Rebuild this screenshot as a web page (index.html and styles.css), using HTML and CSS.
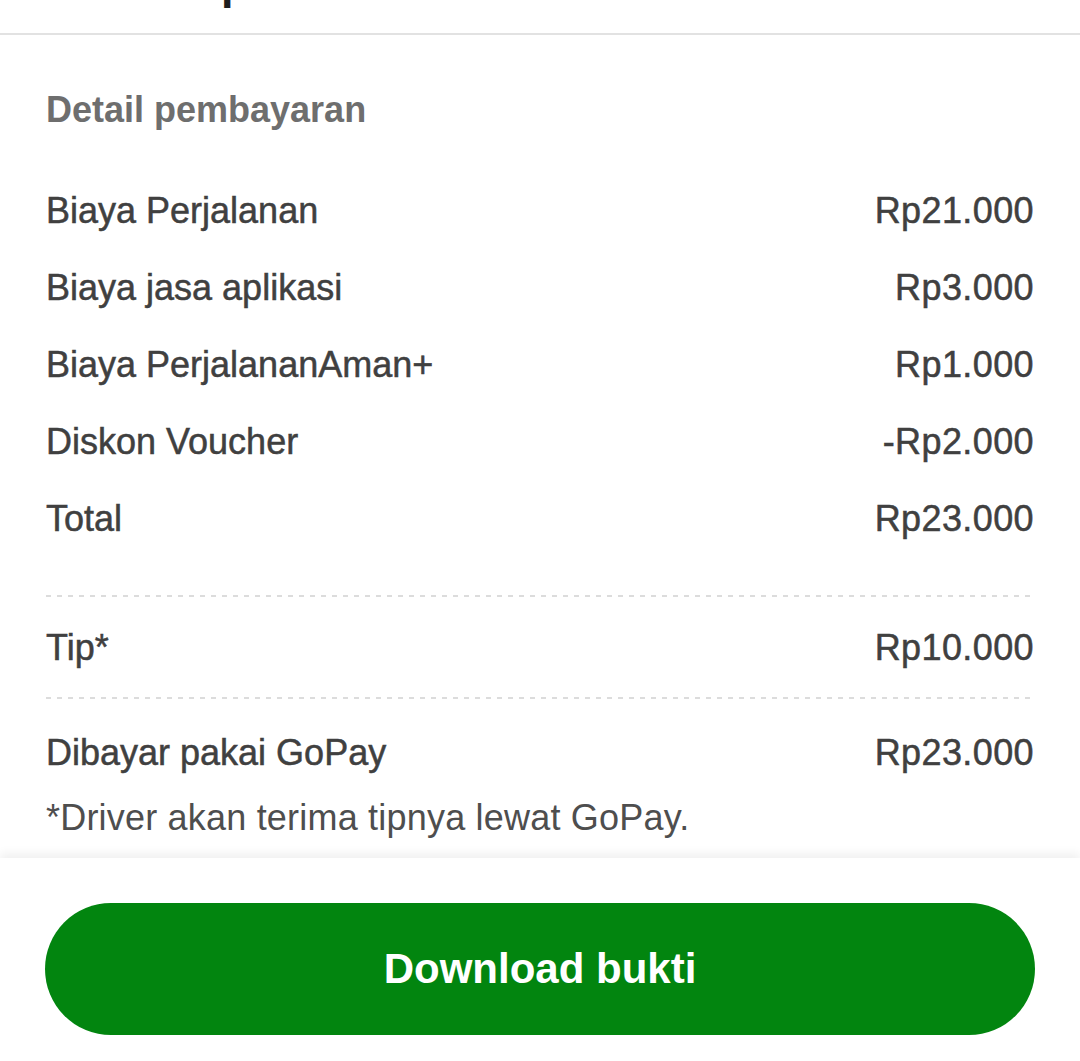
FILE: index.html
```html
<!DOCTYPE html>
<html lang="id">
<head>
<meta charset="utf-8">
<title>Detail pembayaran</title>
<link rel="stylesheet" href="styles.css">
</head>
<body>
<div class="page">
  <header class="topbar">
    <h1 class="topbar-title">Rincian pesanan</h1>
  </header>
  <main class="details">
    <h2 class="details-title">Detail pembayaran</h2>
    <div class="rows">
      <div class="row"><span>Biaya Perjalanan</span><span class="amount">Rp21.000</span></div>
      <div class="row"><span>Biaya jasa aplikasi</span><span class="amount">Rp3.000</span></div>
      <div class="row"><span>Biaya PerjalananAman+</span><span class="amount">Rp1.000</span></div>
      <div class="row"><span>Diskon Voucher</span><span class="amount">-Rp2.000</span></div>
      <div class="row"><span>Total</span><span class="amount">Rp23.000</span></div>
    </div>
    <div class="dash dash-first"></div>
    <div class="row"><span>Tip*</span><span class="amount">Rp10.000</span></div>
    <div class="dash dash-second"></div>
    <div class="row"><span>Dibayar pakai GoPay</span><span class="amount">Rp23.000</span></div>
    <p class="note">*Driver akan terima tipnya lewat GoPay.</p>
  </main>
  <footer class="footer">
    <button class="btn" type="button">Download bukti</button>
  </footer>
</div>
</body>
</html>
```
FILE: styles.css
```css
html, body {
  margin: 0;
  padding: 0;
  background: #ffffff;
}

body {
  font-family: "Liberation Sans", Arial, sans-serif;
  color: #404040;
  width: 1080px;
  height: 1061px;
  overflow: hidden;
}

.page {
  display: flex;
  flex-direction: column;
  height: 1061px;
}

.topbar {
  height: 33px;
  overflow: hidden;
  border-bottom: 2px solid #e2e2e2;
  padding: 0 46px;
}

.topbar-title {
  margin: -36px 0 0 0;
  font-size: 45px;
  line-height: 40px;
  font-weight: 700;
  color: #1e1e1e;
}

.details {
  padding: 53px 46px 13px 46px;
  display: flex;
  flex-direction: column;
}

.details-title {
  margin: 0 0 40px 0;
  font-size: 36px;
  line-height: 44px;
  font-weight: 700;
  color: #6e6e6e;
}

.rows {
  display: flex;
  flex-direction: column;
}

.row {
  display: flex;
  justify-content: space-between;
  font-size: 36px;
  line-height: 77px;
  color: #404040;
  -webkit-text-stroke: 0.5px #404040;
}

.amount {
  letter-spacing: 0.4px;
}

.dash {
  height: 2px;
  background: repeating-linear-gradient(to right, #dcdcdc 0 5px, transparent 5px 11px);
}

.dash-first {
  margin: 38px 0 12px 0;
}

.dash-second {
  margin: 11px 0 15px 0;
}

.note {
  margin: 0;
  font-size: 36px;
  line-height: 54px;
  color: #4e4e4e;
  letter-spacing: 0.2px;
}

.footer {
  flex: 1;
  padding: 45px 45px 0 45px;
  box-shadow: 0 -5px 9px rgba(0, 0, 0, 0.06);
}

.btn {
  width: 100%;
  height: 132px;
  border: none;
  border-radius: 66px;
  background: #02850f;
  color: #ffffff;
  font-family: "Liberation Sans", Arial, sans-serif;
  font-weight: 700;
  font-size: 42px;
  display: flex;
  align-items: center;
  justify-content: center;
  padding: 0;
}
```
